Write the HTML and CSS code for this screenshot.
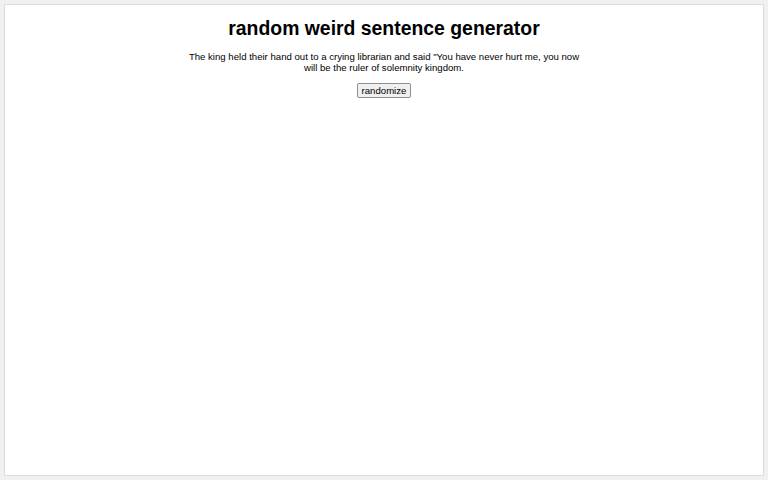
FILE: index.html
```html
<!DOCTYPE html>
<html>
<head>
<meta charset="utf-8">
<link rel="stylesheet" href="styles.css">
</head>
<body>
<div class="frame">
  <h1 class="title">random weird sentence generator</h1>
  <p class="sentence">The king held their hand out to a crying librarian and said "You have never hurt me, you now will be the ruler of solemnity kingdom.</p>
  <button class="btn">randomize</button>
</div>
</body>
</html>
```
FILE: styles.css
```css
html, body { margin: 0; padding: 0; height: 100%; }
body {
  background: #f0f0f0;
  padding: 4px 4px 4px 4px;
  box-sizing: border-box;
  font-family: "Liberation Sans", Arial, sans-serif;
}
.frame {
  background: #fff;
  border: 1px solid #dcdcdc;
  height: 100%;
  box-sizing: border-box;
  display: flex;
  flex-direction: column;
  align-items: center;
}
.title {
  font-size: 19.4px;
  font-weight: bold;
  margin: 12px 0 0;
  line-height: 23px;
  color: #000;
}
.sentence {
  font-size: 9.6px;
  line-height: 11px;
  width: 396px;
  text-align: center;
  margin: 11px 0 0;
  color: #000;
}
.btn {
  margin-top: 10px;
  font-family: "Liberation Sans", Arial, sans-serif;
  font-size: 9.6px;
  padding: 1px 4px;
  background: #f0f0f0;
  border: 1px solid #8f8f8f;
  border-radius: 2px;
  color: #000;
}
```
